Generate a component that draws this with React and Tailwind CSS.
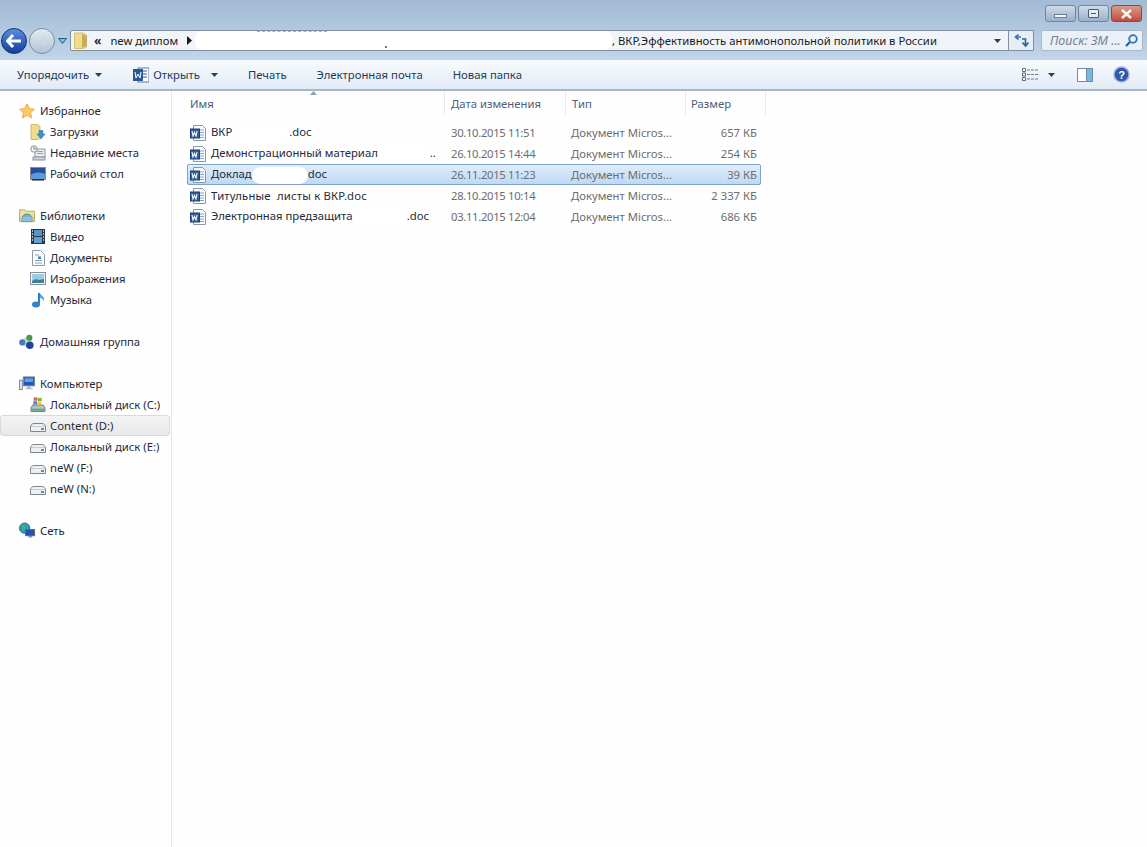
const Caret = ({ className = '' }) => (
  <svg width="7" height="4" viewBox="0 0 7 4" className={`shrink-0 ${className}`}>
    <path d="M0 0h7L3.500 4z" fill="#2b3f58" />
  </svg>
);

const WordDoc = () => (
  <svg width="16" height="16" viewBox="0 0 16 16" className="shrink-0">
    <path d="M3.500.5h9l3 3v12h-12z" fill="#fafcfe" stroke="#8c98a6" />
    <path d="M10 5h4M10 7.500h4M10 10h4M10 12.500h4" stroke="#8fa3ba" />
    <rect x="0.500" y="4" width="9" height="9" fill="#2f5fa5" stroke="#1c3f75" />
    <path d="M2 6l1 5 1.500-3.500L6 11l1-5" fill="none" stroke="#fff" strokeWidth="1.100" />
  </svg>
);

const Star = () => (
  <svg width="17" height="16" viewBox="0 0 17 16">
    <path d="M8.500.5l2.400 5 5.400.7-4 3.700 1 5.400-4.800-2.700L3.700 15.300l1-5.400-4-3.700 5.400-.7z" fill="#f9cd62" stroke="#e8a046" />
  </svg>
);

const Downloads = () => (
  <svg width="16" height="16" viewBox="0 0 16 16">
    <path d="M1 .5h6l3 2v12l-3 1H1z" fill="#efdc8e" stroke="#cbb86c" />
    <path d="M9 6.500h4v3.500h2l-4 5-4-5h2z" fill="#3f8fd2" stroke="#2a6ea8" strokeWidth="0.500" />
  </svg>
);

const Recent = () => (
  <svg width="16" height="16" viewBox="0 0 16 16">
    <rect x="5" y="4" width="10" height="8" fill="#e8ecef" stroke="#8d969e" />
    <path d="M7 6.500h6M7 8.500h6" stroke="#9aa4ad" />
    <rect x="3" y="12" width="12" height="3" fill="#cfd5da" stroke="#8d969e" />
    <circle cx="4" cy="4" r="3.200" fill="#f2f2f2" stroke="#8d969e" />
    <path d="M4 2v2h2" fill="none" stroke="#666" strokeWidth="0.800" />
  </svg>
);

const Desktop = () => (
  <svg width="16" height="14" viewBox="0 0 16 14">
    <rect x="0.500" y="0.500" width="15" height="12" fill="#244f9c" stroke="#7f8ea1" />
    <path d="M1 8c4-3 9-3 14-1v5H1z" fill="#5e9ad8" />
    <path d="M2 12.800h12" stroke="#222c3a" strokeWidth="1.500" />
  </svg>
);

const Libraries = () => (
  <svg width="17" height="15" viewBox="0 0 17 15">
    <path d="M.5 3V1.500h6L8 3h8.500v11H.5z" fill="#efe09c" stroke="#b9a962" />
    <path d="M3 11a5.500 5 0 0 1 11 0v3H3z" fill="#79b3c8" stroke="#4c87a0" />
    <rect x="1" y="9" width="15" height="5" fill="#9ccbd8" opacity="0.600" />
  </svg>
);

const Film = () => (
  <svg width="14" height="15" viewBox="0 0 14 15">
    <rect width="14" height="15" fill="#2b3640" />
    <rect x="3" y="1" width="8" height="6" fill="#4f96cf" />
    <rect x="3" y="8" width="8" height="6" fill="#5aa2d8" />
    <path d="M1 2h1M1 5h1M1 8h1M1 11h1M12 2h1M12 5h1M12 8h1M12 11h1" stroke="#dfe6ec" strokeWidth="1.500" />
  </svg>
);

const Docs = () => (
  <svg width="13" height="16" viewBox="0 0 13 16">
    <path d="M.5.5h8l4 4v11H.5z" fill="#fbfcfd" stroke="#8f99a3" />
    <path d="M3 5h4M3 10.500h7M3 13h7" stroke="#8aa0b8" />
    <rect x="6" y="6.500" width="3" height="2.500" fill="#4d7fb5" />
  </svg>
);

const Pictures = () => (
  <svg width="16" height="13" viewBox="0 0 16 13">
    <rect x="0.500" y="0.500" width="15" height="12" fill="#f3f5f6" stroke="#85909b" />
    <rect x="2" y="2" width="12" height="9" fill="#9ccbe6" />
    <path d="M2 11V9l4-2 3 1 5-1v4z" fill="#3f7f92" />
  </svg>
);

const Music = () => (
  <svg width="15" height="16" viewBox="0 0 15 16">
    <path d="M8 1v10.500" stroke="#2d7cc4" strokeWidth="2" />
    <ellipse cx="5" cy="12.500" rx="4" ry="3" fill="#2f83cd" />
    <path d="M9 1c1 3 5 3 4 8-1-2-3-3-4-3z" fill="#58a7e2" />
  </svg>
);

const HomeGroup = () => (
  <svg width="17" height="16" viewBox="0 0 17 16">
    <circle cx="8.500" cy="8" r="5" fill="#c9d8e8" />
    <circle cx="11" cy="3.500" r="3.300" fill="#4c9a42" />
    <circle cx="3.500" cy="8.500" r="3.300" fill="#4379bd" />
    <circle cx="11.500" cy="11.500" r="4" fill="#21439a" />
  </svg>
);

const Computer = () => (
  <svg width="17" height="15" viewBox="0 0 17 15">
    <rect x="0.500" y="4" width="3" height="10" fill="#e2e6ea" stroke="#7b8692" />
    <rect x="4.500" y="0.500" width="12" height="9.500" fill="#2452b4" stroke="#7a8a9d" />
    <rect x="6" y="2" width="9" height="4" fill="#6a9be6" />
    <path d="M8.500 10.500h4v2h2v1h-8v-1h2z" fill="#aab4be" />
  </svg>
);

const SystemDrive = () => (
  <svg width="17" height="17" viewBox="0 0 17 17">
    <path d="M1 12l2-3h11l2 3v4H1z" fill="#b5c2cc" stroke="#6c7884" />
    <rect x="2" y="13" width="13" height="2" fill="#5aa86a" />
    <rect x="4" y="1" width="4" height="3.500" fill="#e9603c" />
    <rect x="8.500" y="1.500" width="4" height="3.500" fill="#7dbb3f" />
    <rect x="3.500" y="5" width="4" height="3.500" fill="#3b8ddb" />
    <rect x="8" y="5.500" width="4" height="3.500" fill="#f4c23b" />
  </svg>
);

const Drive = () => (
  <svg width="16" height="9" viewBox="0 0 16 9" className="mt-[3px]">
    <path d="M.5 4C.5 2 2 .5 4 .5h8c2 0 3.500 1.500 3.500 3.500v4.500H.5z" fill="#eef0f2" stroke="#7d8790" />
    <path d="M1 3.500h14" stroke="#c4cbd1" />
    <rect x="11" y="5" width="3" height="2" fill="#7d8790" />
  </svg>
);

const Network = () => (
  <svg width="17" height="17" viewBox="0 0 17 17">
    <circle cx="6" cy="6" r="5.500" fill="#2d9ad0" stroke="#1e6d96" />
    <path d="M2.500 3c2.500-1 4 0 4.500 2S5 8.500 3.500 7.500z" fill="#56b24c" />
    <rect x="7" y="7.500" width="9.500" height="6.500" fill="#2452b4" stroke="#56687e" />
    <path d="M10 14.500h4V16h-4z" fill="#7f8a96" />
  </svg>
);

const ViewsIcon = () => (
  <svg width="16" height="13" viewBox="0 0 16 13">
    <path d="M.5.5h3v3h-3zM.5 5h3v3h-3zM.5 9.500h3v3h-3z" fill="#fff" stroke="#5b6b7e" />
    <path d="M5 2h11M5 6.500h11M5 11h11" stroke="#6b7c90" strokeDasharray="3 1" />
  </svg>
);

const PaneIcon = () => (
  <svg width="16" height="14" viewBox="0 0 16 14">
    <rect x="0.500" y="0.500" width="15" height="13" fill="#fff" stroke="#6f8ba8" />
    <rect x="10" y="1" width="5" height="12" fill="#79b7dc" />
    <path d="M9.500 1v12" stroke="#6f8ba8" />
  </svg>
);

const Help = () => (
  <svg width="17" height="17" viewBox="0 0 17 17">
    <circle cx="8.500" cy="8.500" r="7.500" fill="#2f58ad" stroke="#9ab3d6" strokeWidth="1.500" />
    <text x="8.500" y="12.500" textAnchor="middle" fontSize="11" fontWeight="700" fill="#fff" fontFamily="Liberation Sans, sans-serif">?</text>
  </svg>
);

const Row = ({ Icon, label, indent, active }) => (
  <div
    className={`h-[21px] flex items-center ${indent ? (active ? 'pl-[29px]' : 'pl-[30px]') : 'pl-[19px]'} ${
      active ? 'bg-gradient-to-b from-[#f4f4f4] to-[#e8e8e8] border border-[#dadada] rounded-[3px] mr-[1px]' : ''
    }`}
  >
    <span className="w-[16px] h-[16px] shrink-0 flex items-center justify-center">
      <Icon />
    </span>
    <span className={`${indent ? 'ml-[4px]' : 'ml-[5px]'} pt-[2px] text-[#1e2a38] whitespace-nowrap`}>{label}</span>
  </div>
);

const sidebar = [
  { Icon: Star, label: 'Избранное' },
  { Icon: Downloads, label: 'Загрузки', indent: true },
  { Icon: Recent, label: 'Недавние места', indent: true },
  { Icon: Desktop, label: 'Рабочий стол', indent: true },
  null,
  { Icon: Libraries, label: 'Библиотеки' },
  { Icon: Film, label: 'Видео', indent: true },
  { Icon: Docs, label: 'Документы', indent: true },
  { Icon: Pictures, label: 'Изображения', indent: true },
  { Icon: Music, label: 'Музыка', indent: true },
  null,
  { Icon: HomeGroup, label: 'Домашняя группа' },
  null,
  { Icon: Computer, label: 'Компьютер' },
  { Icon: SystemDrive, label: 'Локальный диск (C:)', indent: true },
  { Icon: Drive, label: 'Content (D:)', indent: true, active: true },
  { Icon: Drive, label: 'Локальный диск (E:)', indent: true },
  { Icon: Drive, label: 'neW (F:)', indent: true },
  { Icon: Drive, label: 'neW (N:)', indent: true },
  null,
  { Icon: Network, label: 'Сеть' },
];

const Blot = ({ className }) => <span className={`inline-block h-[17px] align-middle bg-white rounded-full ${className}`} />;

const files = [
  { name: <>ВКР<Blot className="w-[57px]" />.doc</>, date: '30.10.2015 11:51', size: '657 КБ' },
  { name: <>Демонстрационный материал<Blot className="w-[52px]" />..</>, date: '26.10.2015 14:44', size: '254 КБ' },
  { name: <>Доклад<Blot className="w-[56px]" />doc</>, date: '26.11.2015 11:23', size: '39 КБ', selected: true },
  { name: <span className="tracking-[0.2px]">Титульные&nbsp; листы к ВКР.doc</span>, date: '28.10.2015 10:14', size: '2 337 КБ' },
  { name: <>Электронная предзащита<Blot className="w-[54px]" />.doc</>, date: '03.11.2015 12:04', size: '686 КБ' },
];

const headers = [
  { label: 'Имя', cls: 'w-[258px] pl-[3px]' },
  { label: 'Дата изменения', cls: 'w-[121px] pl-[6px]' },
  { label: 'Тип', cls: 'w-[120px] pl-[6px]' },
  { label: 'Размер', cls: 'w-[80px] pl-[5px]' },
];

const WinButton = ({ className, children }) => (
  <div className={`w-[31px] h-[17px] rounded-[3px] border flex items-center justify-center ${className}`}>
    {children}
  </div>
);

export default function App() {
  return (
    <div className="w-[1147px] h-[847px] overflow-hidden bg-[#fefefe] flex flex-col text-[11.3px] font-['Noto_Sans','Open_Sans',sans-serif] text-[#1e2a38]">
      <div className="h-[60px] shrink-0 bg-gradient-to-b from-[#a3bbd6] to-[#c0d5e9]">
        <div className="h-[30px] flex justify-end gap-[2px] pt-[5px] pr-[5px]">
          <WinButton className="border-[#71859c] bg-gradient-to-b from-[#cfdcea] to-[#9ab0c8]">
            <span className="w-[13px] h-[4px] mt-[5px] bg-[#f2f6fa] border border-[#6b7e94]" />
          </WinButton>
          <WinButton className="border-[#71859c] bg-gradient-to-b from-[#cfdcea] to-[#9ab0c8]">
            <span className="w-[11px] h-[9px] border border-[#4a5a6c] rounded-[1px] bg-[#e4ecf4] flex items-center justify-center">
              <span className="w-[5px] h-[1px] bg-[#4a5a6c]" />
            </span>
          </WinButton>
          <WinButton className="border-[#7d4f4a] bg-gradient-to-b from-[#d99a8e] to-[#bf4c3c]">
            <svg width="13" height="10" viewBox="0 0 13 10">
              <path d="M2 1l9 8M11 1l-9 8" stroke="#f6f6f6" strokeWidth="2.500" />
            </svg>
          </WinButton>
        </div>
        <div className="h-[21px] flex items-center pr-[4px]">
          <div className="w-[70px] h-[26px] shrink-0 flex items-center pl-[1px]">
            <div className="w-[26px] h-[26px] rounded-full border border-[#16315f] bg-gradient-to-b from-[#5b8fe0] to-[#123f9b] flex items-center justify-center">
              <svg width="16" height="14" viewBox="0 0 16 14">
                <path d="M7 1L1.500 7 7 13M2 7h13" fill="none" stroke="#fff" strokeWidth="3" />
              </svg>
            </div>
            <div className="w-[26px] h-[26px] ml-[2px] rounded-full border border-[#7e8fa2] bg-gradient-to-b from-[#e3ebf3] to-[#b3c4d6] flex items-center justify-center">
              <svg width="14" height="12" viewBox="0 0 14 12">
                <path d="M8 1l5 5-5 5M12 6H1" fill="none" stroke="#cdd7e1" strokeWidth="2" />
              </svg>
            </div>
            <svg width="9" height="6" viewBox="0 0 9 6" className="ml-[3px] shrink-0">
              <path d="M.5.5h8L4.500 5.500z" fill="#7fc0ea" stroke="#27577f" />
            </svg>
          </div>
          <div className="flex-1 h-[21px] flex items-center bg-[#f1f5fa] border border-[#7f8ea0] rounded-l-[2px] overflow-hidden">
            <svg width="14" height="17" viewBox="0 0 14 17" className="ml-[3px] shrink-0">
              <path d="M.5 1h9l3 2v12l-3 1.500h-9z" fill="#f0dc8a" stroke="#d5be6c" />
              <path d="M8 2l5 2v10l-5 2z" fill="#c9ad58" />
            </svg>
            <span className="ml-[6px] text-[12px] font-bold leading-none">«</span>
            <span className="ml-[9px] pt-[2px] text-[#1a1a1a] whitespace-nowrap">new диплом</span>
            <svg width="5" height="9" viewBox="0 0 5 9" className="ml-[9px] shrink-0">
              <path d="M0 0l5 4.500L0 9z" fill="#1a1a1a" />
            </svg>
            <span className="relative ml-[3px] w-[417px] h-[19px] shrink-0 bg-white rounded-[7px]">
              <span className="absolute left-[62px] top-0 w-[70px] border-t border-dashed border-[#a8b0b8]" />
              <span className="absolute left-[190px] bottom-[2px] w-[2px] h-[2px] bg-[#777]" />
            </span>
            <span className="pt-[2px] text-[#1a1a1a] whitespace-nowrap">, ВКР,Эффективность антимонопольной политики в России</span>
            <Caret className="ml-auto mr-[7px]" />
            <div className="w-[25px] h-full shrink-0 border-l border-[#7f8ea0] bg-[#e6eef6] flex items-center justify-center">
              <svg width="15" height="13" viewBox="0 0 15 13">
                <path d="M7 3H2M4.500.5L1.500 3l3 2.500" fill="none" stroke="#3f78b8" strokeWidth="1.700" />
                <path d="M8 5h3.500v6M8.500 8.500l3 3.500 3-3.500" fill="none" stroke="#2f6a8f" strokeWidth="1.700" />
              </svg>
            </div>
          </div>
          <div className="w-[102px] h-[21px] ml-[7px] flex items-center justify-between pl-[8px] pr-[4px] bg-[#e9f0f7] border border-[#a9b9ca] rounded-[2px]">
            <span className="italic pt-[1px] text-[12.500px] text-[#76818d] whitespace-nowrap">Поиск: ЗМ ...</span>
            <svg width="13" height="13" viewBox="0 0 13 13" className="shrink-0">
              <circle cx="8" cy="5" r="3.800" fill="none" stroke="#2c78c0" strokeWidth="1.800" />
              <path d="M5 8l-4 4" stroke="#1e5f9e" strokeWidth="2.200" />
            </svg>
          </div>
        </div>
      </div>

      <div className="h-[31px] shrink-0 flex items-center bg-gradient-to-b from-[#f8fbfe] to-[#e2ebf5] border-b-2 border-[#a9b7c8] text-[#1e3a5a] [&>span]:pt-[2px]">
        <span className="ml-[17px]">Упорядочить</span>
        <Caret className="ml-[6px]" />
        <svg width="16" height="16" viewBox="0 0 16 16" className="ml-[31px] shrink-0">
          <rect x="5" y="1" width="11" height="14" fill="#fff" stroke="#5678a8" />
          <path d="M10 4h4M10 7h4M10 10h4" stroke="#2b5797" />
          <rect y="2" width="10" height="12" fill="#2b5797" />
          <path d="M2 5l1 6 2-4 2 4 1-6" fill="none" stroke="#fff" />
        </svg>
        <span className="ml-[4px]">Открыть</span>
        <Caret className="ml-[11px]" />
        <span className="ml-[30px]">Печать</span>
        <span className="ml-[30px]">Электронная почта</span>
        <span className="ml-[30px]">Новая папка</span>
        <div className="ml-auto flex items-center">
          <ViewsIcon />
          <Caret className="ml-[10px]" />
          <span className="ml-[22px] flex">
            <PaneIcon />
          </span>
          <span className="ml-[20px] mr-[17px] flex">
            <Help />
          </span>
        </div>
      </div>

      <div className="flex-1 flex min-h-0">
        <div className="w-[172px] shrink-0 border-r border-[#dde8f3] pt-[9px]">
          {sidebar.map((item, i) =>
            item ? <Row key={i} {...item} /> : <div key={i} className="h-[21px]" />
          )}
        </div>

        <div className="flex-1 min-w-0 pl-[15px]">
          <div className="relative flex h-[24px] text-[#4c607a]">
            {headers.map((h) => (
              <div key={h.label} className={`${h.cls} pt-[2px] flex items-center border-r border-[#e3e9f0]`}>
                {h.label}
              </div>
            ))}
            <svg width="7" height="4" viewBox="0 0 7 4" className="absolute left-[123px] top-0">
              <path d="M3.500 0L7 4H0z" fill="#8fa0b3" />
            </svg>
          </div>
          <div className="mt-[7px] w-[574px]">
            {files.map((f, i) => (
              <div
                key={i}
                className={`h-[21px] flex items-center rounded-[2px] [&>div]:pt-[1px] ${
                  f.selected ? 'bg-gradient-to-b from-[#e2eefc] to-[#bcd8f4] outline outline-1 -outline-offset-1 outline-[#7da2ce]' : ''
                }`}
              >
                <div className="w-[258px] shrink-0 flex items-center pl-[3px]">
                  <WordDoc />
                  <span className="ml-[5px] whitespace-nowrap text-[#1e2a38]">{f.name}</span>
                </div>
                <div className="w-[120px] shrink-0 pl-[6px] tracking-[-0.33px] text-[#6d6d6d] whitespace-nowrap">{f.date}</div>
                <div className="w-[120px] shrink-0 pl-[6px] text-[#6d6d6d] whitespace-nowrap">Документ Micros...</div>
                <div className="flex-1 text-right pr-[4px] text-[#6d6d6d] whitespace-nowrap">{f.size}</div>
              </div>
            ))}
          </div>
        </div>
      </div>
    </div>
  );
}
